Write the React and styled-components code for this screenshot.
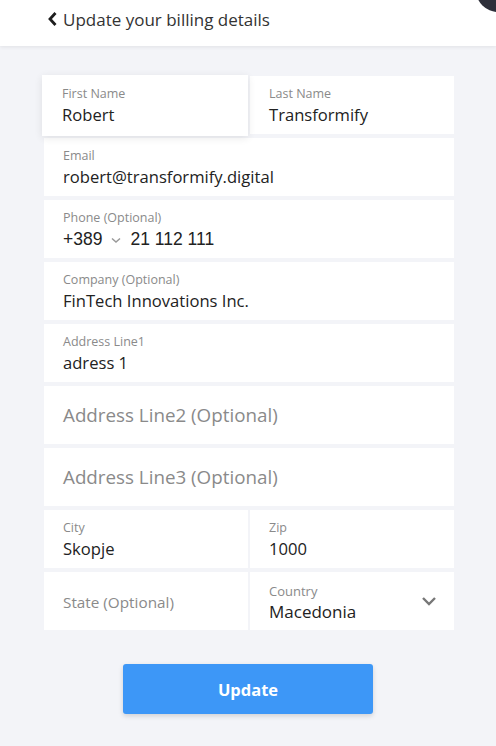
import React from "react";
import styled, { createGlobalStyle } from "styled-components";

const Global = createGlobalStyle`
  html, body { margin: 0; padding: 0; background: #f3f4f8; }
  body { font-family: "Open Sans", "Noto Sans", sans-serif; overflow: hidden; }
  * { box-sizing: border-box; }
`;

const Page = styled.div`
  position: relative;
  width: 496px;
  height: 746px;
  overflow: hidden;
  background: #f3f4f8;
`;

const Header = styled.header`
  height: 46px;
  background: #fff;
  box-shadow: 0 1px 4px rgba(0, 0, 0, 0.08);
  display: flex;
  align-items: center;
  padding: 0 0 8px 46px;
  gap: 4px;
  color: #333;
  font-size: 17px;
`;

const Dot = styled.div`
  position: absolute;
  top: -32px;
  right: -24px;
  width: 44px;
  height: 44px;
  border-radius: 50%;
  background: #2e2f3a;
  z-index: 2;
`;

const Form = styled.div`
  margin: 30px 42px 0 44px;
  display: flex;
  flex-direction: column;
  gap: 4px;
`;

const Row = styled.div`
  display: grid;
  grid-template-columns: 1fr 1fr;
  gap: 2px;
`;

const Field = styled.div`
  position: relative;
  height: 58px;
  background: #fff;
  padding: 0 19px;
  display: flex;
  flex-direction: column;
  justify-content: center;
  ${(p) =>
    p.$focused &&
    `
    margin: -1px 0 -2px -2px;
    height: 61px;
    padding-left: 20px;
    box-shadow: 0 2px 8px rgba(0,0,0,0.09);
    z-index: 1;
  `}
`;

const Label = styled.div`
  font-size: 12.5px;
  color: #8a8a8a;
  line-height: 17px;
`;

const Value = styled.div`
  font-size: 16.6px;
  color: #222;
  line-height: 22px;
  margin-top: 2px;
`;

const Placeholder = styled.div`
  font-size: ${(p) => p.$size || 18.8}px;
  color: #8a8a8a;
  margin-top: ${(p) => p.$offset || 0}px;
`;

const PhoneValue = styled.div`
  display: flex;
  align-items: center;
  font-family: "Liberation Sans", Arial, sans-serif;
  font-size: 17.5px;
  color: #222;
  line-height: 22px;
  gap: 9px;
  margin-top: 2px;
`;

const Caret = styled.span`
  display: flex;
  align-items: center;
  margin-top: 3px;
`;

const Chevron = styled.span`
  position: absolute;
  right: 17px;
  top: 50%;
  transform: translateY(-50%);
  display: flex;
`;

const CountryBlock = styled.div`
  display: flex;
  flex-direction: column;
  gap: 1px;
  margin-top: 4px;
`;

const CountryLabel = styled(Label)`
  font-size: 13px;
  line-height: 17px;
`;
const CountryValue = styled(Value)`
  font-size: 17px;
  line-height: 22px;
  margin-top: 0;
`;

const ButtonWrap = styled.div`
  display: flex;
  justify-content: center;
  margin-top: 34px;
`;

const Button = styled.button`
  width: 250px;
  height: 50px;
  border: none;
  border-radius: 3px;
  background: #3d97f7;
  color: #fff;
  font-family: "Open Sans", sans-serif;
  font-weight: 700;
  font-size: 16.5px;
  box-shadow: 0 2px 5px rgba(0, 0, 0, 0.15);
`;

const TextField = ({ label, value, focused }) => (
  <Field $focused={focused}>
    <Label>{label}</Label>
    <Value>{value}</Value>
  </Field>
);

export default function App() {
  return (
    <Page>
      <Global />
      <Dot />
      <Header>
        <svg width="13" height="16" viewBox="0 0 13 16">
          <path d="M9.5 2 L4 8 L9.5 14" fill="none" stroke="#1e1e1e" strokeWidth="2.8" />
        </svg>
        <span>Update your billing details</span>
      </Header>
      <Form>
        <Row>
          <TextField label="First Name" value="Robert" focused />
          <TextField label="Last Name" value="Transformify" />
        </Row>
        <TextField label="Email" value="robert@transformify.digital" />
        <Field>
          <Label>Phone (Optional)</Label>
          <PhoneValue>
            <span>+389</span>
            <Caret>
              <svg width="10" height="7" viewBox="0 0 10 7">
                <path d="M1 1.5 L5 5 L9 1.5" fill="none" stroke="#999" strokeWidth="1.5" />
              </svg>
            </Caret>
            <span>21 112 111</span>
          </PhoneValue>
        </Field>
        <TextField label="Company (Optional)" value="FinTech Innovations Inc." />
        <TextField label="Address Line1" value="adress 1" />
        <Field>
          <Placeholder>Address Line2 (Optional)</Placeholder>
        </Field>
        <Field>
          <Placeholder>Address Line3 (Optional)</Placeholder>
        </Field>
        <Row>
          <TextField label="City" value="Skopje" />
          <TextField label="Zip" value="1000" />
        </Row>
        <Row>
          <Field>
            <Placeholder $size={15.3} $offset={2}>State (Optional)</Placeholder>
          </Field>
          <Field>
            <CountryBlock>
              <CountryLabel>Country</CountryLabel>
              <CountryValue>Macedonia</CountryValue>
            </CountryBlock>
            <Chevron>
              <svg width="16" height="10" viewBox="0 0 16 10">
                <path d="M2 2 L8 8 L14 2" fill="none" stroke="#777" strokeWidth="2.4" />
              </svg>
            </Chevron>
          </Field>
        </Row>
      </Form>
      <ButtonWrap>
        <Button>Update</Button>
      </ButtonWrap>
    </Page>
  );
}
